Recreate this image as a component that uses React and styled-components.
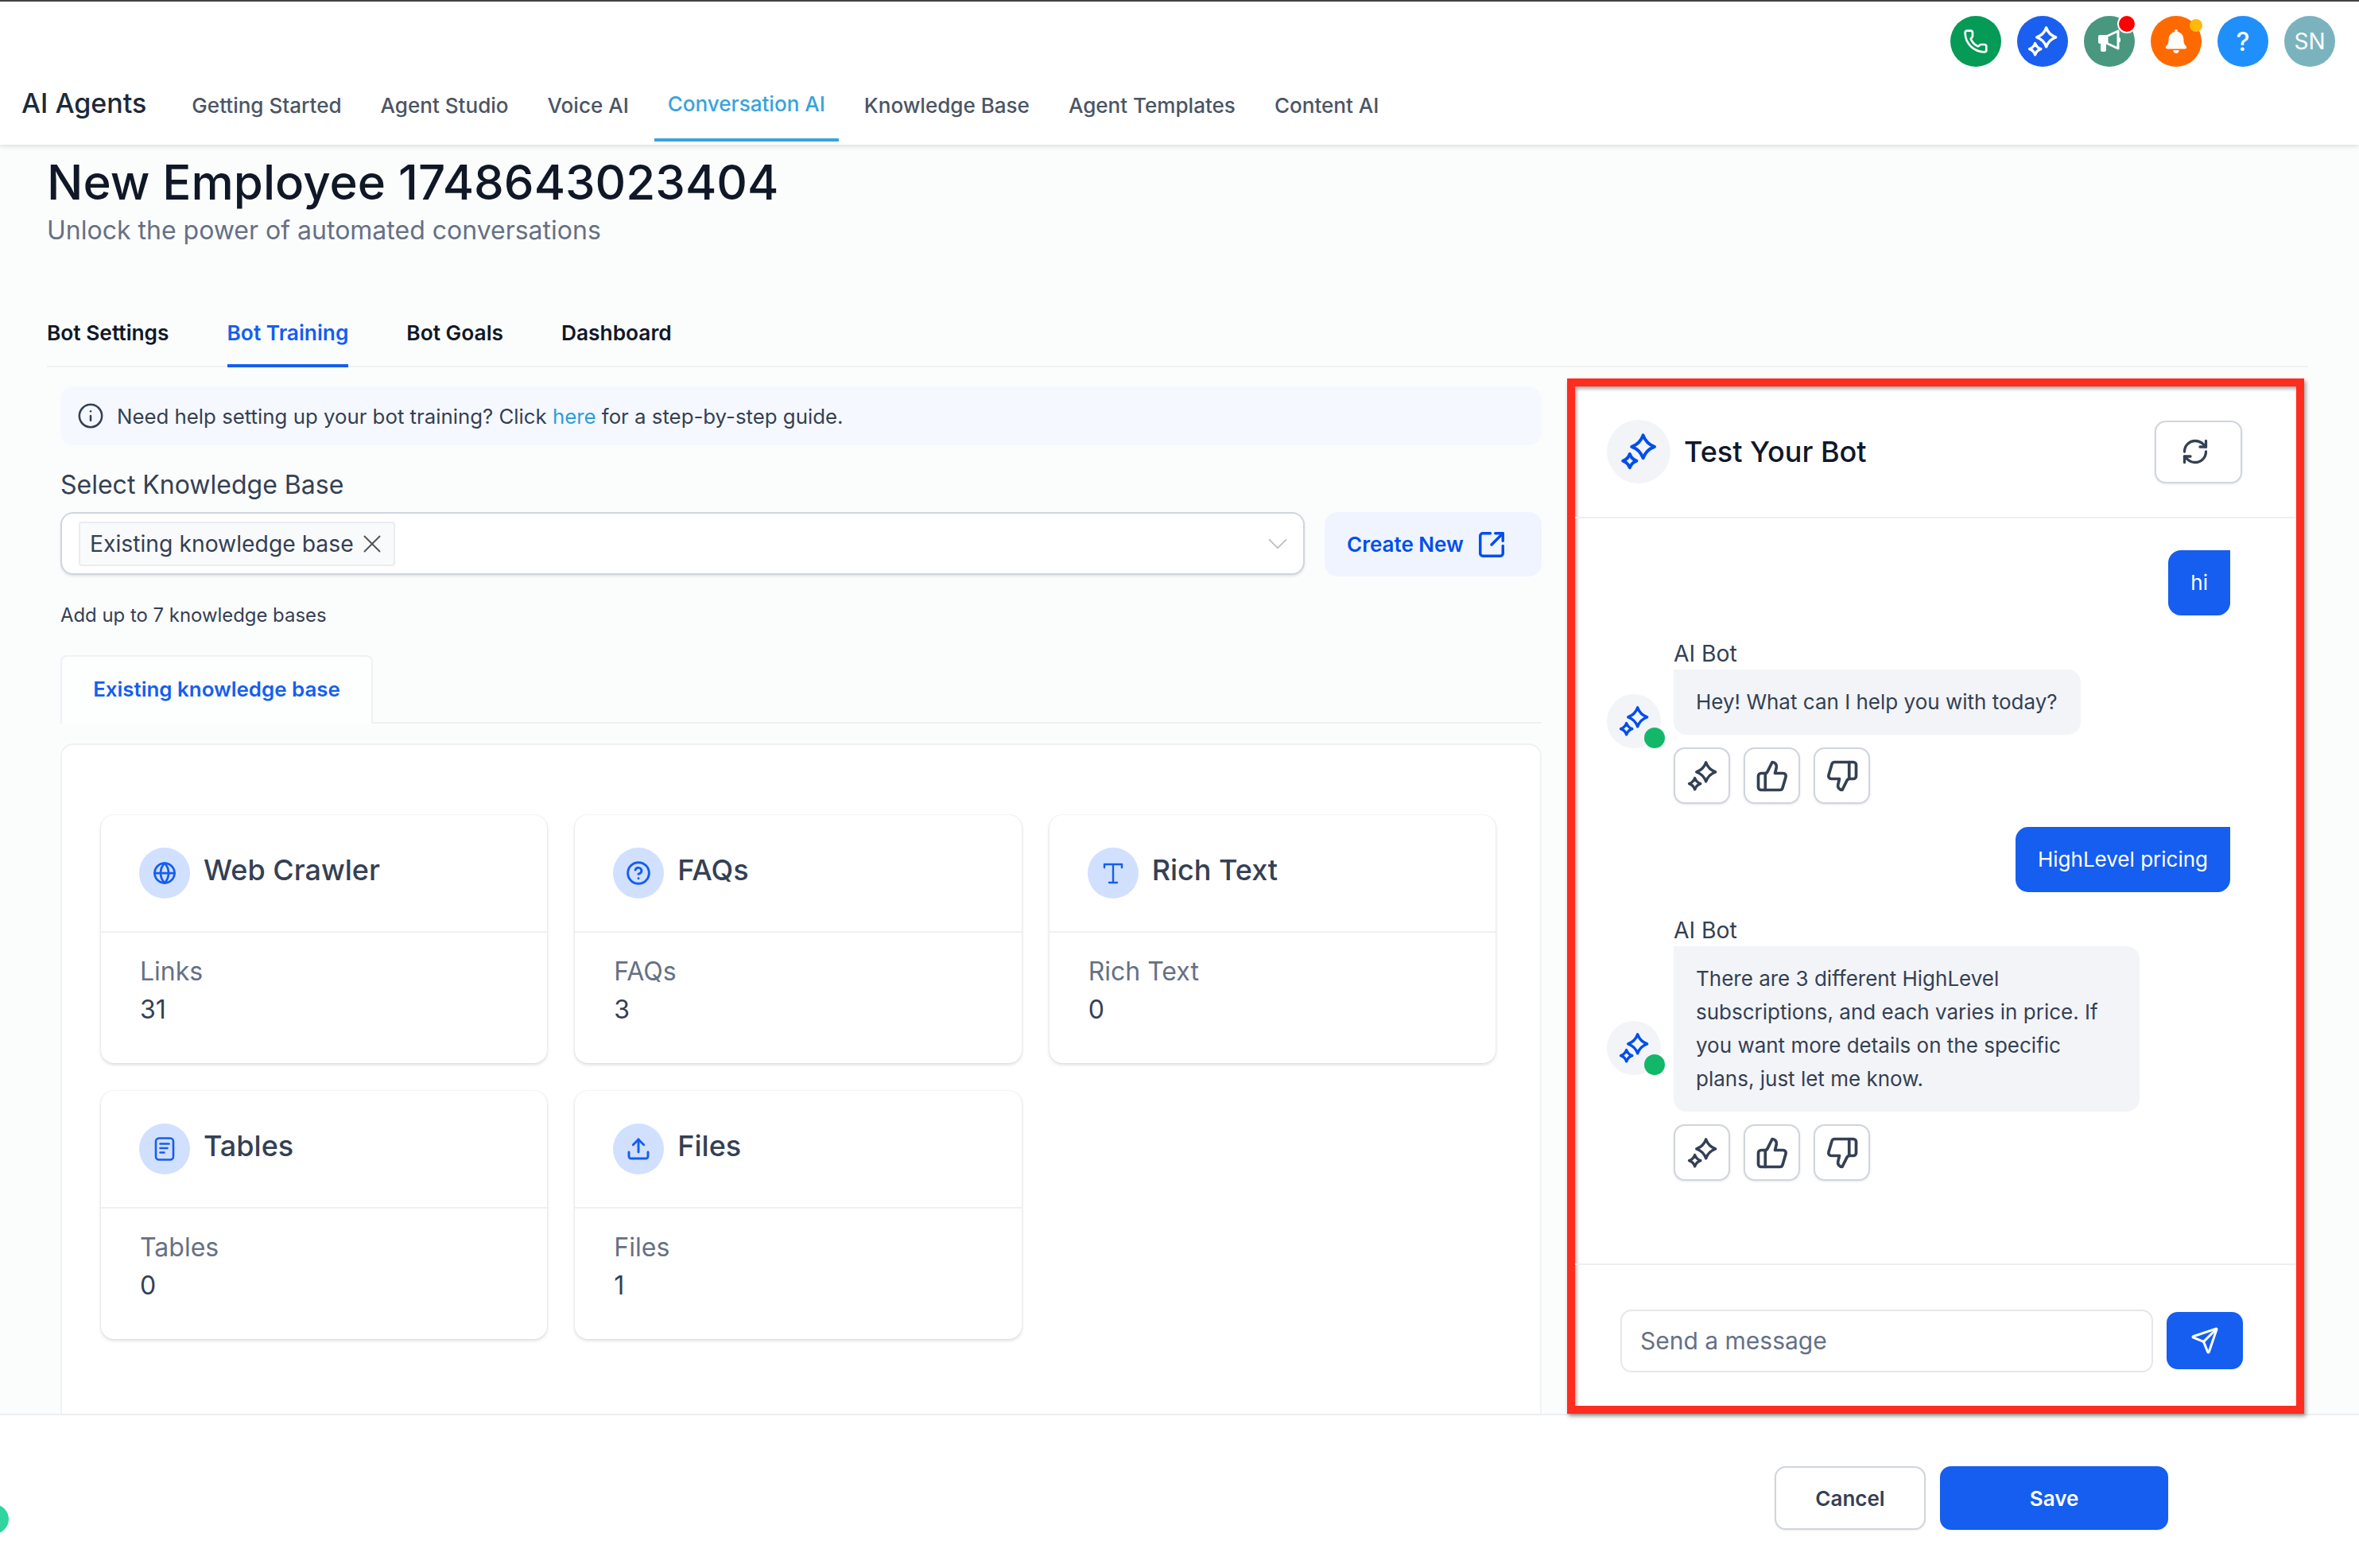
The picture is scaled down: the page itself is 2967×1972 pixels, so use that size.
import React from "react";
import styled, { createGlobalStyle } from "styled-components";
import {
  Phone,
  ThumbsUp,
  ThumbsDown,
  Send,
  RefreshCw,
  Globe,
  CircleHelp,
  Upload,
  SquareArrowOutUpRight,
  Info,
  X,
  ChevronDown,
} from "lucide-react";
import { FaBell } from "react-icons/fa";

const GlobalStyle = createGlobalStyle`
  html, body {
    margin: 0;
    padding: 0;
    background: #fff;
  }
  body {
    font-family: Inter, "Liberation Sans", sans-serif;
    color: #344054;
    overflow: hidden;
  }
  * { box-sizing: border-box; }
`;

const starPath = (cx, cy, r) => {
  const k = r * 0.26;
  return `M${cx} ${cy - r}Q${cx + k} ${cy - k} ${cx + r} ${cy}Q${cx + k} ${cy + k} ${cx} ${cy + r}Q${cx - k} ${cy + k} ${cx - r} ${cy}Q${cx - k} ${cy - k} ${cx} ${cy - r}Z`;
};

function Sparkles({ size = 48, color = "#004eeb", weight = 2 }) {
  return (
    <svg width={size} height={size} viewBox="0 0 24 24" fill="none" stroke={color} strokeWidth={weight} strokeLinejoin="round">
      <path d={starPath(14.8, 8.9, 7.2)} />
      <path d={starPath(6.4, 17.8, 4.3)} />
    </svg>
  );
}

function MegaphoneIcon() {
  return (
    <svg width="30" height="32" viewBox="0 0 30 32" fill="none">
      <path d="M3 8h9v11H3a2 2 0 0 1-2-2V10a2 2 0 0 1 2-2z" fill="#fff" />
      <rect x="4" y="18" width="7" height="11" rx="2" fill="#fff" />
      <path d="M12 9.500 26 3v22l-14-6.500z" stroke="#fff" strokeWidth="3" strokeLinejoin="round" />
      <rect x="26" y="11" width="3" height="6" rx="1.500" fill="#fff" />
    </svg>
  );
}

function TablesIcon() {
  return (
    <svg width="28" height="32" viewBox="0 0 28 32" fill="none" stroke="#155eef" strokeWidth="2.600" strokeLinecap="round">
      <rect x="3" y="2.500" width="22" height="27" rx="4" />
      <path d="M8.500 9.500h11M8.500 15h9M8.500 20.500h5" />
    </svg>
  );
}

function RichTextIcon() {
  return (
    <svg width="30" height="30" viewBox="0 0 30 30" fill="none" stroke="#155eef" strokeWidth="2.400" strokeLinecap="round" strokeLinejoin="round">
      <path d="M4 8V4h22v4M15 4v23M10 27h10" />
    </svg>
  );
}

const Page = styled.div`
  width: 2967px;
  height: 1972px;
  display: flex;
  flex-direction: column;
  overflow: hidden;
  background: #fff;
`;

const Header = styled.header`
  position: relative;
  z-index: 2;
  height: 182px;
  flex: none;
  background: #fff;
  border-top: 2px solid #444;
  box-shadow: 0 2px 6px rgba(16, 24, 40, 0.14);
  display: flex;
  flex-direction: column;
`;

const TopActions = styled.div`
  display: flex;
  justify-content: flex-end;
  gap: 20px;
  padding: 18px 30px 0 0;
  height: 98px;
`;

const RoundAction = styled.div`
  position: relative;
  width: 64px;
  height: 64px;
  border-radius: 50%;
  background: ${(p) => p.$bg};
  color: #fff;
  display: flex;
  align-items: center;
  justify-content: center;
  font-size: ${(p) => p.$text || 28}px;
  font-weight: ${(p) => p.$weight || 400};
`;

const Dot = styled.span`
  position: absolute;
  top: ${(p) => p.$top}px;
  right: ${(p) => p.$right}px;
  width: ${(p) => p.$size}px;
  height: ${(p) => p.$size}px;
  border-radius: 50%;
  background: ${(p) => p.$color};
  box-shadow: ${(p) => (p.$ring ? "0 0 0 2px #fff" : "none")};
`;

const NavRow = styled.nav`
  display: flex;
  height: 78px;
  padding-left: 27px;
`;

const Brand = styled.div`
  font-size: 34px;
  font-weight: 500;
  color: #1d2939;
  line-height: 60px;
  margin-right: 40px;
`;

const NavLinks = styled.div`
  display: flex;
  gap: 15px;
`;

const NavLink = styled.a`
  height: 78px;
  padding: 0 17px;
  font-size: 26.05px;
  font-weight: 500;
  color: ${(p) => (p.$active ? "#37a3dc" : "#4b5565")};
  line-height: ${(p) => (p.$active ? "62px" : "66px")};
  border-bottom: 4px solid ${(p) => (p.$active ? "#37a3dc" : "transparent")};
  white-space: nowrap;
`;

const Main = styled.main`
  flex: 1;
  min-height: 0;
  display: flex;
  flex-direction: column;
  background: #fbfdfd;
  padding: 15px 64px 0 59px;
`;

const Title = styled.h1`
  margin: 0;
  font-size: 60px;
  line-height: 64px;
  font-weight: 500;
  color: #101828;
`;

const Subtitle = styled.p`
  margin: 9px 0 0;
  font-size: 32px;
  line-height: 40px;
  color: #667085;
`;

const Tabs = styled.div`
  display: flex;
  gap: 73px;
  height: 84px;
  margin-top: 68px;
  flex: none;
  border-bottom: 2px solid #eff0f4;
`;

const Tab = styled.div`
  height: 84px;
  line-height: 81px;
  font-size: 26.3px;
  font-weight: 600;
  color: ${(p) => (p.$active ? "#155eef" : "#101828")};
  border-bottom: 4px solid ${(p) => (p.$active ? "#155eef" : "transparent")};
  white-space: nowrap;
`;

const Body = styled.div`
  flex: 1;
  min-height: 0;
  display: flex;
  gap: 32px;
  padding-top: 14px;
`;

const LeftColumn = styled.section`
  flex: 1;
  min-width: 0;
  overflow: hidden;
  padding: 10px 0 0 17px;
`;

const Alert = styled.div`
  display: flex;
  align-items: center;
  gap: 16px;
  height: 74px;
  padding-left: 21px;
  border-radius: 16px;
  background: #f5f8ff;
  font-size: 25.8px;
  color: #344054;
`;

const AlertLink = styled.a`
  color: #2d9cdb;
`;

const FieldLabel = styled.div`
  margin-top: 32px;
  font-size: 32px;
  line-height: 36px;
  color: #344054;
`;

const SelectRow = styled.div`
  display: flex;
  gap: 25px;
  margin-top: 16px;
  align-items: flex-start;
`;

const SelectBox = styled.div`
  flex: 1;
  height: 79px;
  display: flex;
  align-items: center;
  justify-content: space-between;
  padding: 0 11px 0 21px;
  background: #fff;
  border: 2px solid #d0d5dd;
  border-radius: 16px;
  box-shadow: 0 2px 3px rgba(16, 24, 40, 0.1);
`;

const SelectTag = styled.div`
  display: flex;
  align-items: center;
  gap: 4px;
  height: 56px;
  padding: 0 8px 0 12px;
  background: #f9fafb;
  border: 2px solid #eaecf0;
  border-radius: 4px;
  font-size: 28.300px;
  color: #344054;
`;

const CreateButton = styled.button`
  width: 273px;
  height: 81px;
  display: flex;
  align-items: center;
  gap: 16px;
  padding: 0 0 0 28px;
  border: 0;
  border-radius: 16px;
  background: #eff4ff;
  font-family: inherit;
  font-size: 26px;
  font-weight: 600;
  color: #004eeb;
`;

const Hint = styled.div`
  margin-top: 35px;
  font-size: 23.900px;
  line-height: 28px;
  color: #344054;
`;

const SubTabs = styled.div`
  margin-top: 36px;
  height: 86px;
  border-bottom: 2px solid #eff0f4;
`;

const SubTab = styled.div`
  width: 393px;
  height: 86px;
  border: 2px solid #eff0f4;
  border-bottom: 0;
  border-radius: 8px 8px 0 0;
  background: #fdfefe;
  text-align: center;
  line-height: 82px;
  font-size: 25.900px;
  font-weight: 600;
  color: #155eef;
`;

const SourcesPanel = styled.div`
  margin-top: 25px;
  height: 1000px;
  padding: 88px 56px 0 49px;
  background: #fff;
  border: 2px solid #f0f1f3;
  border-radius: 16px;
  display: grid;
  grid-template-columns: repeat(3, 1fr);
  grid-auto-rows: 312px;
  column-gap: 35px;
  row-gap: 35px;
`;

const SourceCard = styled.article`
  background: #fff;
  border-radius: 16px;
  box-shadow: 0 2px 4px rgba(16, 24, 40, 0.14), 0 0 2px rgba(16, 24, 40, 0.1);
`;

const CardHead = styled.div`
  height: 148px;
  display: flex;
  align-items: center;
  gap: 17px;
  padding: 0 48px;
  border-bottom: 2px solid #eef0f3;
`;

const IconCircle = styled.span`
  flex: none;
  width: 64px;
  height: 64px;
  border-radius: 50%;
  background: #d1e0ff;
  color: #155eef;
  display: flex;
  align-items: center;
  justify-content: center;
`;

const CardTitle = styled.span`
  font-size: 36px;
  font-weight: 500;
  color: #344054;
  margin-bottom: 9px;
`;

const CardBody = styled.div`
  padding: 25px 49px 0;
`;

const StatLabel = styled.div`
  font-size: 32px;
  line-height: 48px;
  color: #667085;
`;

const StatValue = styled.div`
  font-size: 32px;
  line-height: 48px;
  color: #344054;
`;

const ChatPanel = styled.aside`
  flex: none;
  width: 927px;
  margin-right: 5px;
  display: flex;
  flex-direction: column;
  background: #fff;
  border: 10px solid #ff2d1e;
  box-shadow: 2px 3px 5px rgba(0, 0, 0, 0.4), inset 2px 3px 4px rgba(0, 0, 0, 0.35);
  position: relative;
  z-index: 1;
`;

const ChatHead = styled.div`
  flex: none;
  height: 166px;
  display: flex;
  align-items: center;
  gap: 17px;
  padding: 0 68px 0 40px;
  border-bottom: 2px solid #eceef2;
`;

const BotCircle = styled.span`
  position: relative;
  flex: none;
  width: ${(p) => p.$size}px;
  height: ${(p) => p.$size}px;
  margin-bottom: ${(p) => p.$lift || 0}px;
  border-radius: 50%;
  background: #f2f4f7;
  display: flex;
  align-items: center;
  justify-content: center;
`;

const OnlineDot = styled.span`
  position: absolute;
  right: -5px;
  bottom: 0;
  width: 26px;
  height: 26px;
  border-radius: 50%;
  background: #12b76a;
`;

const ChatTitle = styled.h2`
  flex: 1;
  margin: 0;
  font-size: 36px;
  font-weight: 500;
  color: #101828;
`;

const IconButton = styled.button`
  flex: none;
  width: ${(p) => p.$width}px;
  height: ${(p) => p.$height}px;
  display: flex;
  align-items: center;
  justify-content: center;
  padding: 0 ${(p) => p.$nudge || 0}px 0 0;
  background: #fff;
  border: 2px solid #d0d5dd;
  border-radius: 14px;
  color: #344054;
  box-shadow: 0 1px 3px rgba(16, 24, 40, 0.1);
`;

const Messages = styled.div`
  flex: 1;
  min-height: 0;
  display: flex;
  flex-direction: column;
  padding: 40px 83px 0 40px;
`;

const UserBubble = styled.div`
  align-self: flex-end;
  padding: 20px 28px;
  margin-bottom: 32px;
  background: #155eef;
  color: #fff;
  font-size: 26px;
  line-height: 42px;
  border-radius: 16px 0 16px 16px;
`;

const BotRow = styled.div`
  display: flex;
  align-items: center;
  gap: 16px;
  margin-bottom: 29px;
`;

const BotContent = styled.div`
  display: flex;
  flex-direction: column;
  align-items: flex-start;
`;

const BotName = styled.div`
  font-size: 28.3px;
  line-height: 32px;
  color: #344054;
`;

const BotBubble = styled.div`
  margin-top: 4px;
  max-width: 586px;
  padding: 20px 29px 20px 28px;
  background: #f2f4f7;
  color: #344054;
  font-size: 26px;
  line-height: 42px;
  border-radius: 0 16px 16px 16px;
`;

const Reactions = styled.div`
  display: flex;
  gap: 17px;
  margin-top: 16px;
`;

const Composer = styled.div`
  flex: none;
  height: 179px;
  display: flex;
  align-items: center;
  gap: 17px;
  padding: 13px 67px 0 57px;
  border-top: 2px solid #eceef2;
`;

const MessageInput = styled.div`
  flex: 1;
  height: 79px;
  display: flex;
  align-items: center;
  padding: 0 23px;
  background: #fff;
  border: 2px solid #e4e7ec;
  border-radius: 14px;
  font-size: 30px;
  color: #667085;
`;

const SendButton = styled.button`
  flex: none;
  width: 96px;
  height: 72px;
  display: flex;
  align-items: center;
  justify-content: center;
  border: 0;
  border-radius: 14px;
  background: #155eef;
  color: #fff;
`;

const Footer = styled.footer`
  position: relative;
  flex: none;
  height: 194px;
  display: flex;
  justify-content: flex-end;
  align-items: flex-start;
  gap: 18px;
  padding: 64px 240px 0 0;
  background: #fff;
  border-top: 2px solid #eceef2;
`;

const FooterButton = styled.button`
  width: ${(p) => (p.$primary ? 287 : 190)}px;
  height: 80px;
  border-radius: 14px;
  border: 2px solid ${(p) => (p.$primary ? "#155eef" : "#d0d5dd")};
  background: ${(p) => (p.$primary ? "#155eef" : "#fff")};
  color: ${(p) => (p.$primary ? "#fff" : "#344054")};
  font-family: inherit;
  font-size: 26px;
  font-weight: 600;
  box-shadow: 0 1px 2px rgba(16, 24, 40, 0.08);
`;

const SupportBubble = styled.span`
  position: absolute;
  left: -26px;
  top: 112px;
  width: 37px;
  height: 37px;
  border-radius: 50%;
  background: #32d59e;
`;

const navItems = ["Getting Started", "Agent Studio", "Voice AI", "Conversation AI", "Knowledge Base", "Agent Templates", "Content AI"];

const cards = [
  { title: "Web Crawler", label: "Links", value: "31", icon: <Globe size={30} strokeWidth={2.2} /> },
  { title: "FAQs", label: "FAQs", value: "3", icon: <CircleHelp size={32} strokeWidth={2.2} /> },
  { title: "Rich Text", label: "Rich Text", value: "0", icon: <RichTextIcon /> },
  { title: "Tables", label: "Tables", value: "0", icon: <TablesIcon /> },
  { title: "Files", label: "Files", value: "1", icon: <Upload size={32} strokeWidth={2.2} /> },
];

function BotMessage({ children }) {
  return (
    <BotRow>
      <BotCircle $size={68} $lift={3}>
        <Sparkles size={40} />
        <OnlineDot />
      </BotCircle>
      <BotContent>
        <BotName>AI Bot</BotName>
        <BotBubble>{children}</BotBubble>
        <Reactions>
          <IconButton $width={71} $height={71}>
            <Sparkles size={40} color="#344054" />
          </IconButton>
          <IconButton $width={71} $height={71}>
            <ThumbsUp size={42} strokeWidth={2.1} />
          </IconButton>
          <IconButton $width={71} $height={71}>
            <ThumbsDown size={42} strokeWidth={2.1} />
          </IconButton>
        </Reactions>
      </BotContent>
    </BotRow>
  );
}

export default function App() {
  return (
    <Page>
      <GlobalStyle />
      <Header>
        <TopActions>
          <RoundAction $bg="#059a56">
            <Phone size={32} strokeWidth={2} />
          </RoundAction>
          <RoundAction $bg="#1a5ff0">
            <Sparkles size={40} color="#fff" />
          </RoundAction>
          <RoundAction $bg="#4a9780">
            <MegaphoneIcon />
            <Dot $top={0} $right={0} $size={20} $color="#ff0000" $ring />
          </RoundAction>
          <RoundAction $bg="#ff6a00">
            <FaBell size={30} />
            <Dot $top={4} $right={-1} $size={16} $color="#ffb90a" />
          </RoundAction>
          <RoundAction $bg="#1f8ffb" $weight={500} $text={32}>?</RoundAction>
          <RoundAction $bg="#7ab3be">SN</RoundAction>
        </TopActions>
        <NavRow>
          <Brand>AI Agents</Brand>
          <NavLinks>
            {navItems.map((item) => (
              <NavLink key={item} $active={item === "Conversation AI"}>
                {item}
              </NavLink>
            ))}
          </NavLinks>
        </NavRow>
      </Header>
      <Main>
        <Title>New Employee 1748643023404</Title>
        <Subtitle>Unlock the power of automated conversations</Subtitle>
        <Tabs>
          <Tab>Bot Settings</Tab>
          <Tab $active>Bot Training</Tab>
          <Tab>Bot Goals</Tab>
          <Tab>Dashboard</Tab>
        </Tabs>
        <Body>
          <LeftColumn>
            <Alert>
              <Info size={34} strokeWidth={1.8} />
              <span>
                Need help setting up your bot training? Click <AlertLink>here</AlertLink> for a step-by-step guide.
              </span>
            </Alert>
            <FieldLabel>Select Knowledge Base</FieldLabel>
            <SelectRow>
              <SelectBox>
                <SelectTag>
                  Existing knowledge base
                  <X size={38} strokeWidth={1.2} color="#555" />
                </SelectTag>
                <ChevronDown size={42} strokeWidth={1} color="#b5b8be" />
              </SelectBox>
              <CreateButton>
                Create New
                <SquareArrowOutUpRight size={38} strokeWidth={2.2} />
              </CreateButton>
            </SelectRow>
            <Hint>Add up to 7 knowledge bases</Hint>
            <SubTabs>
              <SubTab>Existing knowledge base</SubTab>
            </SubTabs>
            <SourcesPanel>
              {cards.map((card) => (
                <SourceCard key={card.title}>
                  <CardHead>
                    <IconCircle>{card.icon}</IconCircle>
                    <CardTitle>{card.title}</CardTitle>
                  </CardHead>
                  <CardBody>
                    <StatLabel>{card.label}</StatLabel>
                    <StatValue>{card.value}</StatValue>
                  </CardBody>
                </SourceCard>
              ))}
            </SourcesPanel>
          </LeftColumn>
          <ChatPanel>
            <ChatHead>
              <BotCircle $size={80}>
                <Sparkles size={48} />
              </BotCircle>
              <ChatTitle>Test Your Bot</ChatTitle>
              <IconButton $width={110} $height={79} $nudge={8}>
                <RefreshCw size={36} strokeWidth={2.2} />
              </IconButton>
            </ChatHead>
            <Messages>
              <UserBubble>hi</UserBubble>
              <BotMessage>Hey! What can I help you with today?</BotMessage>
              <UserBubble>HighLevel pricing</UserBubble>
              <BotMessage>
                There are 3 different HighLevel subscriptions, and each varies in price. If you want more details on the specific plans, just let me know.
              </BotMessage>
            </Messages>
            <Composer>
              <MessageInput>Send a message</MessageInput>
              <SendButton>
                <Send size={36} strokeWidth={2} />
              </SendButton>
            </Composer>
          </ChatPanel>
        </Body>
      </Main>
      <Footer>
        <SupportBubble />
        <FooterButton>Cancel</FooterButton>
        <FooterButton $primary>Save</FooterButton>
      </Footer>
    </Page>
  );
}
